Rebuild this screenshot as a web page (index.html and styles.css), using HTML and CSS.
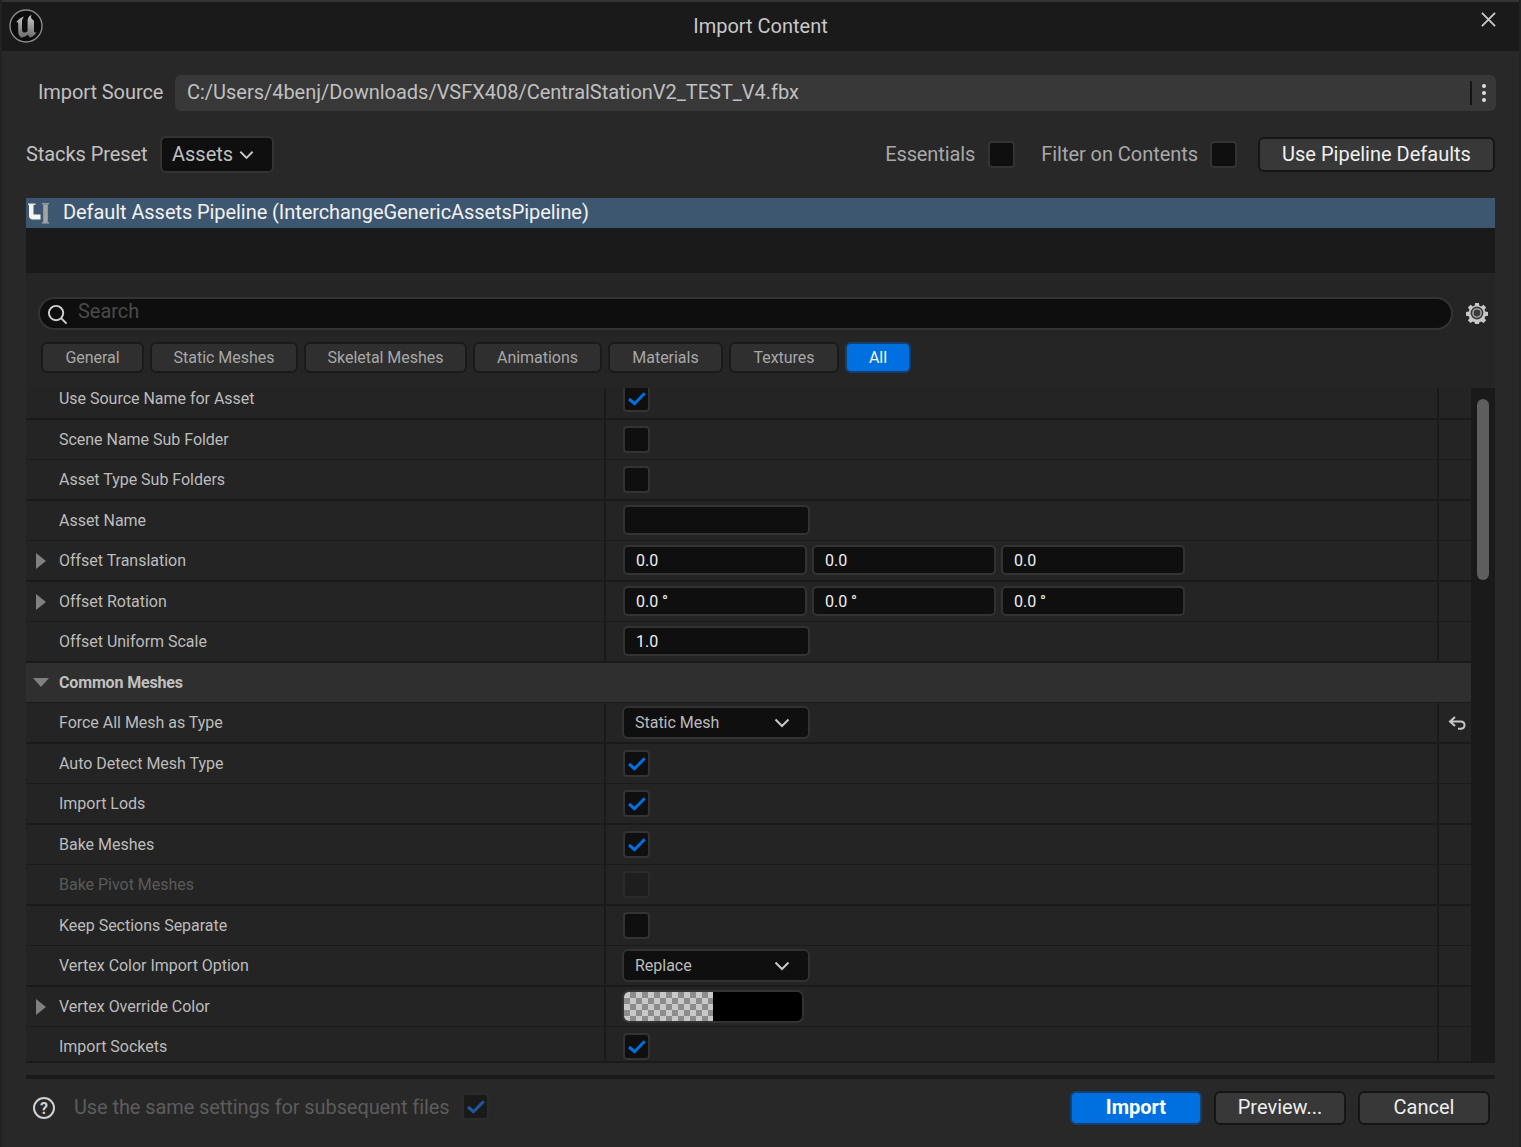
FILE: index.html
```html
<!DOCTYPE html>
<html lang="en">
<head>
<meta charset="utf-8">
<title>Import Content</title>
<link rel="stylesheet" href="styles.css">
</head>
<body>
<svg class="sprite" width="0" height="0" aria-hidden="true">
  <defs>
    <symbol id="check" viewBox="0 0 26 26"><path d="M6 14 L11.5 18.7 L21.7 8.3" fill="none" stroke="currentColor" stroke-width="3"/></symbol>
    <symbol id="chev" viewBox="0 0 16 10"><path d="M1.5 1.5 L8 8 L14.5 1.5" fill="none" stroke="currentColor" stroke-width="2"/></symbol>
  </defs>
</svg>
<div class="window">
  <header class="titlebar">
    <svg class="logo" viewBox="0 0 34 34">
      <defs><linearGradient id="ug" x1="0" y1="0" x2="0" y2="1"><stop offset="0" stop-color="#c8c8c8"/><stop offset="1" stop-color="#6a6a6a"/></linearGradient></defs>
      <circle cx="17" cy="17" r="16" fill="#0c0c0c" stroke="#8c8c8c" stroke-width="1.4"/>
      <path fill="url(#ug)" d="M7 13.5C9 10.5 12 8.5 15 7.5 13.4 9.5 13 11 13 13L13 20.5C13 22.6 13.8 23.6 15.4 23.6 16.6 23.6 17.6 23 18.6 22.2L18.6 11.5C18.6 9.5 19.6 7.5 22.5 5.8 21.6 8 22 9.5 23.4 10.6L25 11.8 25 21.5C25 23.3 25.8 24 27.6 23.2 26.4 25.8 23.5 28 20.8 28.6 20 28 19.4 26.8 19 25.6 17 27.4 14.6 28.6 12.4 28.8 10.4 27.6 9.2 25.6 9.2 22.8L9.2 14.6C9.2 13.4 8.4 13 7 13.5Z"/>
    </svg>
    <div class="title">Import Content</div>
    <svg class="close" viewBox="0 0 16 16"><path d="M1 1 L15 15 M15 1 L1 15" fill="none" stroke="currentColor" stroke-width="2"/></svg>
  </header>

  <main class="main">
    <div class="source-row">
      <label class="source-label">Import Source</label>
      <div class="source-box">
        <span class="source-path">C:/Users/4benj/Downloads/VSFX408/CentralStationV2_TEST_V4.fbx</span>
        <span class="source-sep"></span>
        <span class="dots"><i></i><i></i><i></i></span>
      </div>
    </div>

    <div class="stack-row">
      <span class="stack-label">Stacks Preset</span>
      <div class="preset">Assets <svg class="preset-chev"><use href="#chev"/></svg></div>
      <span class="spacer"></span>
      <span class="opt-label opt-ess">Essentials</span>
      <span class="cb"></span>
      <span class="opt-label opt-filter">Filter on Contents</span>
      <span class="cb"></span>
      <button class="btn-defaults">Use Pipeline Defaults</button>
    </div>

    <div class="pipelines">
      <div class="pipeline-sel">
        <svg class="pipe-icon" viewBox="0 0 23 23">
          <path d="M0 1.5H7.5V3H0Z" fill="#e4e4e4"/>
          <path d="M1 3H5.5V12.5H12.5V17.5H5C2.5 17.5 1 16 1 13.5Z" fill="#f6f6f6"/>
          <path d="M14 1H21V2.4H14Z" fill="#9a9a9a"/>
          <path d="M15.2 2.4H19.8V20H15.2Z" fill="#a4a4a4"/>
          <path d="M14 20H21V21.6H14Z" fill="#9a9a9a"/>
        </svg>
        <span class="pipeline-name">Default Assets Pipeline (InterchangeGenericAssetsPipeline)</span>
      </div>
    </div>

    <section class="panel">
      <div class="search-row">
        <div class="search">
          <svg class="search-icon" viewBox="0 0 22 22"><circle cx="9.5" cy="9.5" r="7.5" fill="none" stroke="currentColor" stroke-width="2"/><path d="M15 15 L20.5 20.5" stroke="currentColor" stroke-width="2"/></svg>
          <span class="search-text">Search</span>
        </div>
        <svg class="gear" viewBox="0 0 24 24">
          <path fill="#c8c8c8" d="M10 1h4l.6 3 1.9.8 2.6-1.7 2.8 2.8-1.7 2.6.8 1.9 3 .6v4l-3 .6-.8 1.9 1.7 2.6-2.8 2.8-2.6-1.7-1.9.8-.6 3h-4l-.6-3-1.9-.8-2.6 1.7-2.8-2.8 1.7-2.6-.8-1.9-3-.6v-4l3-.6.8-1.9-1.7-2.6 2.8-2.8 2.6 1.7 1.9-.8z"/>
          <circle cx="12" cy="12" r="7" fill="#3a3a3a"/>
          <circle cx="12" cy="12" r="4.5" fill="none" stroke="#a8a8a8" stroke-width="1.6"/>
        </svg>
      </div>

      <nav class="tabs">
        <span class="tab">General</span>
        <span class="tab">Static Meshes</span>
        <span class="tab">Skeletal Meshes</span>
        <span class="tab">Animations</span>
        <span class="tab">Materials</span>
        <span class="tab">Textures</span>
        <span class="tab tab-on">All</span>
      </nav>

      <div class="details">
        <div class="rows">
          <div class="row"><div class="name">Use Source Name for Asset</div><div class="value"><span class="cb on"><svg><use href="#check"/></svg></span></div><div class="reset"></div></div>
          <div class="row"><div class="name">Scene Name Sub Folder</div><div class="value"><span class="cb"></span></div><div class="reset"></div></div>
          <div class="row"><div class="name">Asset Type Sub Folders</div><div class="value"><span class="cb"></span></div><div class="reset"></div></div>
          <div class="row"><div class="name">Asset Name</div><div class="value"><span class="field field-wide"></span></div><div class="reset"></div></div>
          <div class="row"><div class="name has-arrow"><i class="arrow"></i>Offset Translation</div><div class="value tri"><span class="field">0.0</span><span class="field">0.0</span><span class="field">0.0</span></div><div class="reset"></div></div>
          <div class="row"><div class="name has-arrow"><i class="arrow"></i>Offset Rotation</div><div class="value tri"><span class="field">0.0 °</span><span class="field">0.0 °</span><span class="field">0.0 °</span></div><div class="reset"></div></div>
          <div class="row"><div class="name">Offset Uniform Scale</div><div class="value"><span class="field field-wide">1.0</span></div><div class="reset"></div></div>
          <div class="row section"><i class="arrow-down"></i>Common Meshes</div>
          <div class="row"><div class="name">Force All Mesh as Type</div><div class="value"><span class="combo">Static Mesh<svg><use href="#chev"/></svg></span></div><div class="reset"><svg class="undo" viewBox="0 0 18 16"><path d="M7 2 L2 6.5 L7 11 M2 6.5 H12.5 C15 6.5 16.5 8 16.5 10 C16.5 12.5 15 13.8 12.5 13.8 H10" fill="none" stroke="currentColor" stroke-width="2"/></svg></div></div>
          <div class="row"><div class="name">Auto Detect Mesh Type</div><div class="value"><span class="cb on"><svg><use href="#check"/></svg></span></div><div class="reset"></div></div>
          <div class="row"><div class="name">Import Lods</div><div class="value"><span class="cb on"><svg><use href="#check"/></svg></span></div><div class="reset"></div></div>
          <div class="row"><div class="name">Bake Meshes</div><div class="value"><span class="cb on"><svg><use href="#check"/></svg></span></div><div class="reset"></div></div>
          <div class="row row-off"><div class="name">Bake Pivot Meshes</div><div class="value"><span class="cb cb-off"></span></div><div class="reset"></div></div>
          <div class="row"><div class="name">Keep Sections Separate</div><div class="value"><span class="cb"></span></div><div class="reset"></div></div>
          <div class="row"><div class="name">Vertex Color Import Option</div><div class="value"><span class="combo">Replace<svg><use href="#chev"/></svg></span></div><div class="reset"></div></div>
          <div class="row"><div class="name has-arrow"><i class="arrow"></i>Vertex Override Color</div><div class="value"><span class="swatch"><i class="checker"></i></span></div><div class="reset"></div></div>
          <div class="row"><div class="name">Import Sockets</div><div class="value"><span class="cb on"><svg><use href="#check"/></svg></span></div><div class="reset"></div></div>
        </div>
        <div class="track"><div class="thumb"></div></div>
      </div>
    </section>

    <div class="rule"></div>

    <footer class="footer">
      <svg class="help" viewBox="0 0 24 24"><circle cx="12" cy="12" r="10" fill="none" stroke="currentColor" stroke-width="2"/><text x="12" y="18" text-anchor="middle" class="help-mark">?</text></svg>
      <span class="same">Use the same settings for subsequent files</span>
      <span class="cb cb-dim"><svg><use href="#check"/></svg></span>
      <span class="spacer"></span>
      <button class="btn btn-primary">Import</button>
      <button class="btn">Preview...</button>
      <button class="btn">Cancel</button>
    </footer>
  </main>
</div>
</body>
</html>
```
FILE: styles.css
```css
* { box-sizing: border-box; }
html, body { margin: 0; padding: 0; }
body { background: #282828; font-family: Roboto, "Liberation Sans", sans-serif; color: #c0c0c0; }
.sprite { position: absolute; }
svg { display: block; }
.window { width: 1521px; height: 1147px; overflow: hidden; display: flex; flex-direction: column; background: #282828; border-left: 2px solid #222; border-right: 2px solid #222; }

.titlebar { height: 51px; flex: none; margin: 0 -2px; padding: 0 25px; border-top: 2px solid #343434; background: #1a1a1a; display: grid; grid-template-columns: 1fr auto 1fr; align-items: center; }
.logo { width: 34px; height: 34px; margin: -2px 0 0 -16px; }
.title { font-size: 20px; color: #c8c8c8; margin-top: -1px; }
.close { width: 15px; height: 15px; color: #c8c8c8; justify-self: end; margin-top: -15px; }

.main { flex: 1; padding: 0 24px; display: flex; flex-direction: column; min-height: 0; }

.source-row { display: flex; height: 36px; margin-top: 24px; align-items: stretch; }
.source-label { flex: 0 0 149px; padding-left: 12px; font-size: 20px; line-height: 34px; color: #c0c0c0; letter-spacing: -0.08px; }
.source-box { flex: 1; margin-right: -1px; background: #383838; border-radius: 6px; display: flex; align-items: center; padding: 0 9px 0 12px; }
.source-path { flex: 1; font-size: 20px; color: #c0c0c0; margin-top: -2px; letter-spacing: -0.02px; }
.source-sep { width: 2px; height: 24px; background: #161616; }
.dots { width: 4px; margin: 0 1px 0 10px; display: flex; flex-direction: column; gap: 3px; }
.dots i { width: 4px; height: 4px; border-radius: 50%; background: #e0e0e0; }

.stack-row { display: flex; height: 37px; margin-top: 25px; align-items: center; }
.stack-label { font-size: 20px; width: 134px; color: #c0c0c0; margin-top: -2px; letter-spacing: -0.08px; }
.preset { width: 114px; height: 37px; background: #0f0f0f; border: 2px solid #333; border-radius: 6px; font-size: 20px; color: #c0c0c0; display: flex; align-items: center; padding: 0 0 2px 10px; }
.preset-chev { width: 15px; height: 10px; margin: 2px 0 0 6px; color: #c8c8c8; }
.spacer { flex: 1; }
.opt-label { font-size: 20px; color: #a8a8a8; margin: -2px 13px 0 0; }
.opt-ess { letter-spacing: -0.1px; }
.opt-filter { margin: -2px 12px 0 26px; letter-spacing: -0.05px; }
.btn-defaults { margin-left: 21px; width: 237px; height: 35px; background: #383838; border: 2px solid #161616; border-radius: 6px; color: #f0f0f0; font: 20px Roboto, sans-serif; padding: 0 0 2px; }

.pipelines { height: 75px; margin-top: 25px; background: #1a1a1a; flex: none; }
.pipeline-sel { height: 30px; background: #3e5770; display: flex; align-items: center; font-size: 20px; color: #f2f2f2; padding-left: 2px; }
.pipeline-name { margin-top: -2px; letter-spacing: -0.07px; }
.pipe-icon { width: 23px; height: 23px; margin-right: 12px; }

.panel { height: 790px; flex: none; background: #252525; padding-top: 24px; display: flex; flex-direction: column; }
.search-row { display: flex; padding-left: 12px; align-items: center; }
.search { width: 1415px; height: 33px; border-radius: 17px; background: #0e0e0e; border: 2px solid #333; display: flex; align-items: center; padding-left: 7px; font-size: 20px; color: #4a4a4a; }
.search-icon { width: 21px; height: 21px; color: #d0d0d0; margin: 1px 10px 0 0; }
.search-text { margin-top: -5px; letter-spacing: -0.03px; }
.gear { width: 22px; height: 22px; margin: -1px 0 0 13px; }

.tabs { display: grid; grid-template-columns: 103px 148px 163px 129px 115px 110px 66px; gap: 6px; height: 31px; margin: 12px 0 0 15px; }
.tab { height: 31px; display: flex; align-items: center; justify-content: center; background: #2f2f2f; border: 2px solid #1a1a1a; border-radius: 6px; font-size: 16px; color: #a8a8a8; letter-spacing: -0.03px; }
.tab-on { background: #0070e0; border-color: #14406e; color: #f4f4f4; }

.details { flex: none; margin-top: 15px; height: 675px; border-bottom: 2px solid #1a1a1a; overflow: hidden; display: flex; }
.rows { width: 1445px; margin-top: -9px; flex: none; }
.track { flex: 1; background: #1a1a1a; }
.thumb { width: 12px; height: 181px; margin: 11px 0 0 6px; background: #5e5e5e; border-radius: 6px; }

.row { display: flex; align-items: stretch; background: #242424; font-size: 16px; color: #bcbcbc; letter-spacing: -0.02px; }
.row:nth-child(odd) { height: 41px; border-bottom: 2px solid #1a1a1a; }
.row:nth-child(even) { height: 40px; border-bottom: 1px solid #1a1a1a; }
.name { width: 580px; flex: none; padding-left: 33px; display: flex; align-items: center; border-right: 2px solid #1a1a1a; }
.name.has-arrow { padding-left: 10px; }
.arrow { width: 0; height: 0; margin-right: 13px; border-left: 10px solid #808080; border-top: 8px solid transparent; border-bottom: 8px solid transparent; }
.value { flex: 1; padding-left: 17px; display: flex; align-items: center; }
.tri { gap: 5px; }
.reset { width: 34px; flex: none; border-left: 2px solid #1a1a1a; display: flex; align-items: center; justify-content: center; }
.undo { width: 18px; height: 16px; color: #c8c8c8; margin: 1px 0 0 3px; }

.row.section { background: #2f2f2f; font-weight: 700; color: #c0c0c0; align-items: center; padding-left: 7px; letter-spacing: -0.15px; }
.arrow-down { width: 0; height: 0; margin-right: 10px; border-top: 9px solid #808080; border-left: 8px solid transparent; border-right: 8px solid transparent; }

.row-off { color: #5a5a5a; }

.cb { width: 27px; height: 27px; flex: none; display: block; background: #0f0f0f; border: 2px solid #333; border-radius: 4px; color: #0070e0; }
.cb svg { width: 26px; height: 26px; margin: -2px; }
.cb-off { background: #1e1e1e; border-color: #2b2b2b; }
.cb-dim { background: #1a1a1a; border-color: #2b2b2b; color: #1d5a9c; margin-top: -2px; }

.field { width: 184px; height: 30px; margin-top: -1px; display: flex; align-items: center; padding-left: 11px; background: #0f0f0f; border: 2px solid #333; border-radius: 5px; color: #f0f0f0; }
.field-wide { width: 187px; }
.combo { width: 188px; height: 33px; margin-left: -1px; display: flex; align-items: center; justify-content: space-between; padding: 0 18px 0 11px; background: #0f0f0f; border: 2px solid #333; border-radius: 6px; color: #bcbcbc; }
.combo svg { width: 16px; height: 10px; color: #c8c8c8; }
.swatch { width: 182px; height: 33px; margin-left: -1px; display: block; background: #000; border: 2px solid #333; border-radius: 7px; overflow: hidden; }
.checker { display: block; width: 89px; height: 100%; background: conic-gradient(#8c8c8c 25%, #c8c8c8 0 50%, #8c8c8c 0 75%, #c8c8c8 0) 0 0 / 12px 12px; }

.rule { height: 4px; margin-top: 12px; background: #1a1a1a; flex: none; }
.footer { flex: 1; display: flex; align-items: center; padding: 0 5px 11px 6px; }
.help { width: 24px; height: 24px; color: #d0d0d0; margin-top: 1px; }
.help-mark { font: 700 16px Roboto, sans-serif; fill: #d0d0d0; }
.same { font-size: 20px; color: #5c5c5c; margin: -2px 12px 0 18px; letter-spacing: -0.095px; }
.btn { width: 132px; height: 34px; margin-left: 12px; background: #383838; border: 2px solid #161616; border-radius: 6px; color: #eee; font: 20px Roboto, sans-serif; padding: 0 0 2px; }
.btn-primary { background: #0070e0; border-color: #14406e; color: #fff; font-weight: 700; }
```
